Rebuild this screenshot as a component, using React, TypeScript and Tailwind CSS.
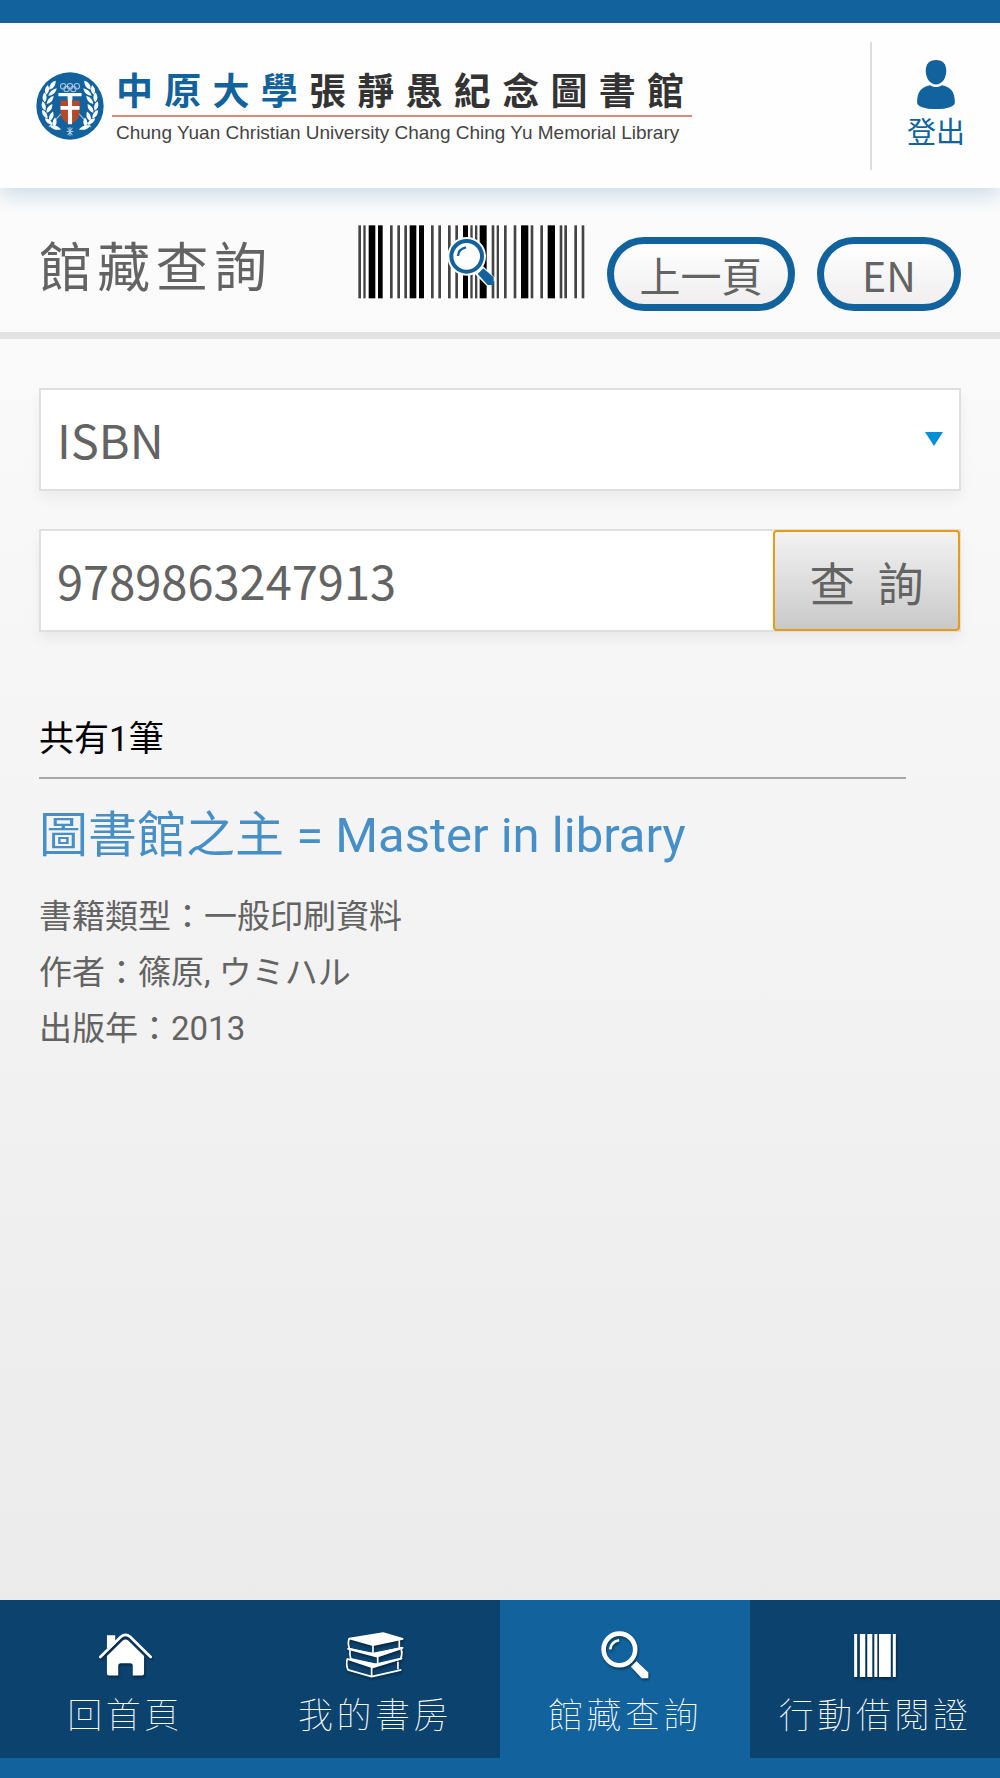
import {useState} from "react";

const bars = [
  [1, 8],
  [16, 7],
  [32, 20],
  [60, 14],
  [96, 8],
  [118, 8],
  [139, 8],
  [155, 20],
  [183, 15],
  [219, 8],
  [241, 8],
  [270, 8],
  [292, 8],
  [315, 15],
  [337, 7],
  [351, 7],
  [365, 21],
  [401, 8],
  [416, 7],
  [438, 8],
  [467, 8],
  [489, 22],
  [518, 8],
  [547, 8],
  [569, 22],
  [605, 8],
  [619, 8],
  [649, 8],
  [671, 8],
];

const Crest = () => (
  <svg viewBox="0 0 200 200" className="h-17 w-17 shrink-0" aria-hidden="true">
    <circle cx="100" cy="100" r="99" fill="#12629d" />
    <g fill="none" stroke="#a9c6de" strokeWidth="3">
      <circle cx="80" cy="42" r="8" />
      <circle cx="100" cy="42" r="8" />
      <circle cx="120" cy="42" r="8" />
      <circle cx="90" cy="50" r="8" />
      <circle cx="110" cy="50" r="8" />
      <path d="M78 118L38 162M122 118L162 162" />
      <path d="M93 164l14 22M107 164l-14 22M100 162v26M90 175h20" />
    </g>
    <path d="M66 62h68v9H66zM93 71h14v12H93z" fill="#fff" />
    <path d="M72 84h56v34c0 18-12 30-28 36-16-6-28-18-28-36z" fill="#b5482a" />
    <path d="M94 82h12v72h-12zM72 100h56v11H72z" fill="#fff" />
    <g fill="#fff">
      {[0, 1].map((side) => (
        <g key={side} transform={side ? "translate(200 0) scale(-1 1)" : undefined}>
          <path d="M58 26c-14 4-19 12-19 26 13-3 19-12 19-26z" />
          <path d="M35 38c-10 9-11 18-5 29 9-8 11-18 5-29zM61 48c-13 3-21 10-25 22 13 0 22-8 25-22z" />
          <path d="M25 60c-8 11-7 20 1 29 7-10 7-20-1-29zM52 70c-12 4-19 12-21 24 13-2 20-11 21-24z" />
          <path d="M19 86c-5 12-2 21 8 28 4-11 2-21-8-28zM48 94c-12 5-18 14-17 26 12-4 18-13 17-26z" />
          <path d="M18 112c-1 13 5 21 16 25 1-12-5-21-16-25zM50 116c-10 7-14 17-10 28 11-6 14-17 10-28z" />
          <path d="M26 136c3 12 11 18 23 19-3-12-11-18-23-19zM56 134c-8 9-9 19-2 28 8-8 9-18 2-28z" />
          <path d="M40 157c7 11 17 15 34 12-8-10-19-14-34-12z" />
        </g>
      ))}
    </g>
  </svg>
);

const UserIcon = () => (
  <svg viewBox="0 0 116 148" className="h-[49px] w-10" fill="#12629d" aria-hidden="true">
    <path d="M58 0c20 0 31 12 31 32 0 24-13 42-31 42S27 56 27 32C27 12 38 0 58 0z" />
    <path d="M40 76c10 7 26 7 36 0 27 5 39 20 39 52 0 12-22 20-57 20S1 140 1 128c0-32 12-47 39-52z" />
  </svg>
);

const Barcode = () => (
  <svg viewBox="0 0 681 222" className="h-[74px] w-[227px] shrink-0" aria-hidden="true">
    <path d="M0 0h681v222H0z" fill="#fff" />
    {bars.map(([x, w]) => (
      <rect key={x} x={x} y="1" width={w} height="219" fill={w < 9 ? "#444" : "#000"} />
    ))}
    <path d="M362 134l40 40" stroke="#fff" strokeWidth="34" />
    <circle cx="326" cy="94" r="58" fill="#fff" />
    <circle cx="326" cy="94" r="46" fill="none" stroke="#12629d" strokeWidth="12" />
    <path d="M300 93c1-14 9-23 24-26" fill="none" stroke="#12629d" strokeWidth="7" />
    <path d="M376 130l31 27v23h-18l-30-33z" fill="#12629d" />
  </svg>
);

const HomeIcon = () => (
  <svg viewBox="0 0 160 130" className="h-11 w-[53px]" fill="#fff" aria-hidden="true">
    <path d="M24 5h25v17L24 47z" />
    <path d="M4 71L66 10q14-12 28 0l62 61" fill="none" stroke="#fff" strokeWidth="8" strokeLinecap="round" />
    <path d="M24 68l47-46q9-7 18 0l47 46v53q0 6-6 6h-28V98q0-8-8-8H66q-8 0-8 8v29H30q-6 0-6-6z" />
  </svg>
);

const BooksIcon = () => (
  <svg viewBox="0 0 172 136" className="h-[46px] w-[58px]" fill="none" stroke="#fff" strokeWidth="5" strokeLinejoin="round" aria-hidden="true">
    <path d="M10 19L110 3l58 17-88 19z" fill="#fff" />
    <path d="M10 19q-6 12 0 30l70 17 86-20M80 39v25M158 24v21" />
    <path d="M6 50l74 14 88-17-76 26z" fill="#fff" />
    <path d="M12 53q-2 14 2 26l78 18 70-17q6-14 2-30M94 73v24" />
    <path d="M4 80l84 16 77-18-86 27z" fill="#fff" />
    <path d="M4 80q-5 16 2 32l70 20 88-20M76 104v28M154 88v22" />
  </svg>
);

const SearchIcon = () => (
  <svg viewBox="0 0 146 146" className="h-12 w-12" fill="none" stroke="#fff" aria-hidden="true">
    <circle cx="56" cy="56" r="48" strokeWidth="14" />
    <path d="M28 56c1-15 10-25 27-28" strokeWidth="8" />
    <path d="M108 92l36 34v18h-20l-33-35z" fill="#fff" stroke="none" />
  </svg>
);

const CardIcon = () => (
  <svg viewBox="0 0 124 128" className="h-[43px] w-[42px]" fill="#fff" aria-hidden="true">
    <path d="M0 0h9v128H0zM17 0h16v128H17zM39 0h15v128H39zM60 0h9v128h-9zM74 0h35v128H74zM115 0h9v128h-9z" />
  </svg>
);

const tabs = [
  {label: "回首頁", Icon: HomeIcon},
  {label: "我的書房", Icon: BooksIcon},
  {label: "館藏查詢", Icon: SearchIcon, active: true},
  {label: "行動借閱證", Icon: CardIcon},
];

const details = ["書籍類型：一般印刷資料", "作者：篠原, ウミハル", "出版年：2013"];

const App = () => {
  const [field, setField] = useState("isbn");
  const [keyword, setKeyword] = useState("9789863247913");

  return (
    <div className="flex min-h-screen flex-col bg-linear-to-b from-[#fefefe] to-[#e9e9e9] font-['Noto_Sans_CJK_TC','Noto_Sans',sans-serif] text-[#636363]">
      <header className="flex h-[188px] items-center border-t-[23px] border-[#12629d] bg-[#fefefe] pl-9 shadow-[0_8px_20px_#12629d33]">
        <a href="#home" className="flex items-center gap-2">
          <Crest />
          <div>
            <div className="flex w-[580px] justify-between border-b-2 border-[#d98a76] pr-2 pb-1 pl-1 text-[37px] leading-[44px] font-bold text-[#333]">
              {[..."中原大學張靜愚紀念圖書館"].map((char, index) => (
                <span key={char} className={index < 4 ? "text-[#12629d]" : ""}>
                  {char}
                </span>
              ))}
            </div>
            <div className="pt-1 pl-1 font-['Liberation_Sans',sans-serif] text-[19px] leading-6 whitespace-nowrap text-[#444]">
              Chung Yuan Christian University Chang Ching Yu Memorial Library
            </div>
          </div>
        </a>
        <div className="ml-auto flex h-32 w-[130px] flex-col items-center justify-center border-l-2 border-[#dcdcdc]">
          <button className="flex flex-col items-center text-[29px] leading-[42px] text-[#12629d]">
            <UserIcon />
            登出
          </button>
        </div>
      </header>

      <div className="flex h-[151px] items-center border-b-[7px] border-[#e2e2e2] px-[39px] pt-4">
        <h1 className="pb-2 text-[53px] leading-none tracking-widest">館藏查詢</h1>
        <div className="ml-auto flex items-end gap-[22px]">
          <button aria-label="掃描條碼" className="mb-3">
            <Barcode />
          </button>
          <button className="h-[74px] w-[188px] rounded-full border-[7px] border-[#12629d] bg-linear-to-b from-white to-[#f0eeef] text-[41px] leading-none">上一頁</button>
          <button className="h-[74px] w-36 rounded-full border-[7px] border-[#12629d] bg-linear-to-b from-white to-[#f0eeef] text-[41px] leading-none">EN</button>
        </div>
      </div>

      <main className="flex-1 px-[39px] pt-[49px]">
        <form className="space-y-[38px] text-[47px]" onSubmit={(e) => e.preventDefault()}>
          <div className="relative">
            <select
              aria-label="查詢欄位"
              value={field}
              onChange={(e) => setField(e.target.value)}
              className="block h-[103px] w-full appearance-none border-2 border-[#dfdfdf] bg-white px-4 shadow-[0_8px_12px_#0000000d]"
            >
              <option value="isbn">ISBN</option>
            </select>
            <svg viewBox="0 0 18 14" className="pointer-events-none absolute top-11 right-[18px] h-3.5 w-[18px]" aria-hidden="true">
              <path d="M0 0h18L9 14z" fill="#068fd4" />
            </svg>
          </div>
          <div className="flex h-[103px] border-2 border-[#dfdfdf] bg-white shadow-[0_8px_12px_#0000000d]">
            <input aria-label="關鍵字" value={keyword} onChange={(e) => setKeyword(e.target.value)} className="min-w-0 flex-1 px-4 outline-none" />
            <button className="-my-px -mr-px flex w-[187px] items-center justify-center gap-[22px] rounded-sm border-2 border-[#e79c17] bg-linear-to-b from-[#f3f3f3] to-[#c9c9c9] text-[46px] leading-none">
              <span>查</span>
              <span>詢</span>
            </button>
          </div>
        </form>

        <section className="pt-[83px] font-[Roboto,'Noto_Sans_CJK_TC',sans-serif]">
          <p className="mr-[55px] border-b-2 border-[#a8a8a8] pb-3 text-[35px] leading-[50px] text-black">共有1筆</p>
          <h2 className="pt-6 text-[49px] leading-[66px] text-[#468fc7]">
            <a href="#book">圖書館之主 = Master in library</a>
          </h2>
          <ul className="pt-5 text-[33px] leading-[56px]">
            {details.map((line) => (
              <li key={line}>{line}</li>
            ))}
          </ul>
        </section>
      </main>

      <nav className="grid h-[178px] grid-cols-4 border-b-[20px] border-[#12629d] bg-[#0b426e]">
        {tabs.map(({label, Icon, active}) => (
          <a
            key={label}
            href={`#${label}`}
            className={`flex flex-col items-center gap-1.5 pt-7 text-[35px] font-thin whitespace-nowrap text-white ${active ? "bg-[#12629d]" : ""}`}
          >
            <span className="flex h-[54px] items-center drop-shadow-[1px_2px_1px_#0006]">
              <Icon />
            </span>
            <span className="leading-[50px] tracking-widest">{label}</span>
          </a>
        ))}
      </nav>
    </div>
  );
};

export default App;
